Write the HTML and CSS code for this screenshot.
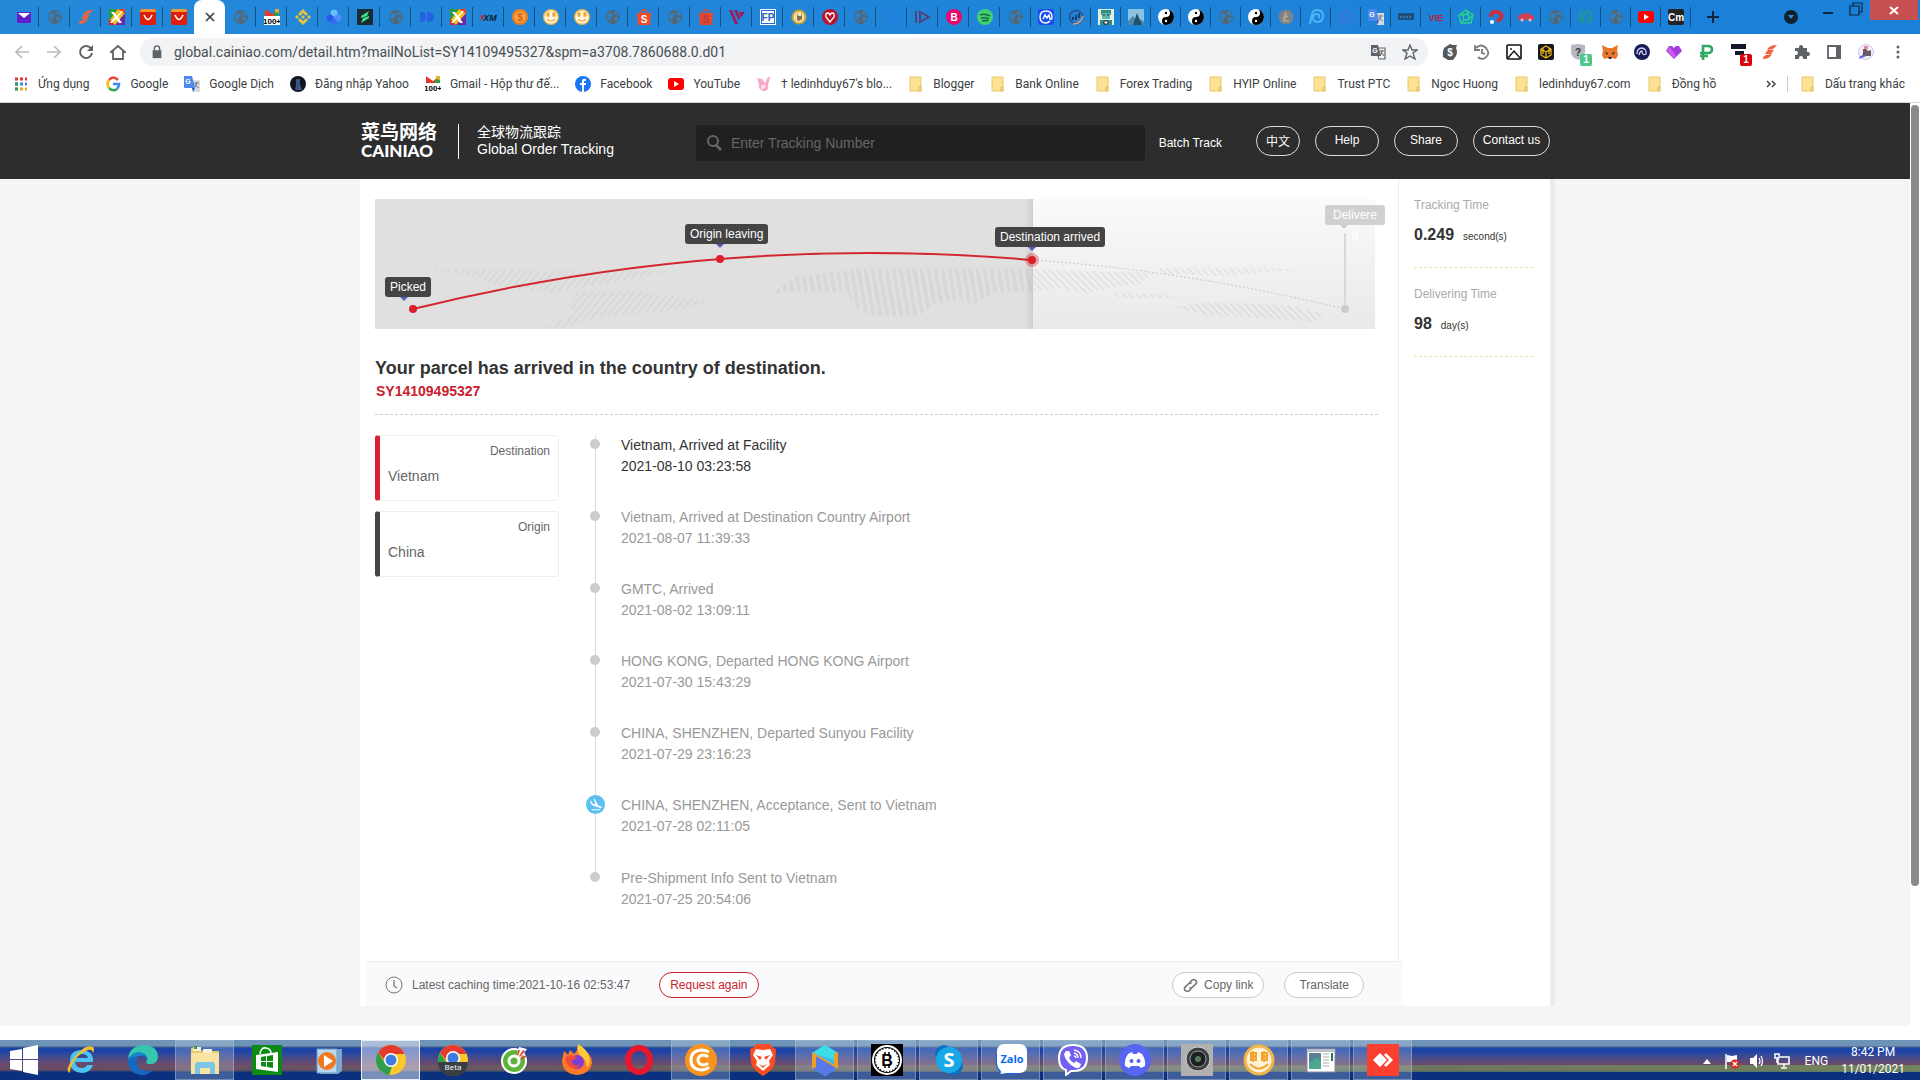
FILE: index.html
```html
<!DOCTYPE html>
<html lang="en">

<head>
  <meta charset="utf-8">
  <title>Global Order Tracking</title>
  <link rel="stylesheet" href="styles.css">
</head>

<body>
  <!-- icon sprite -->
  <svg class="sprite" aria-hidden="true">
    <symbol id="globe" viewBox="0 0 16 16"><circle cx="8" cy="8" r="7" fill="#56656f"/><path d="M2 6l3-2 3 1-1 3-2 1 1 3-1 1-3-4zM9 2l4 2 1 3-3-1-2-1zM9 8l3 0 2 2-3 4-1-3z" fill="#2a83c8"/></symbol>
    <symbol id="yahoo" viewBox="0 0 16 16"><rect x="1" y="3" width="14" height="11" fill="#6020c8"/><path d="M2 4h12L8 9z" fill="#fff"/></symbol>
    <symbol id="stripes" viewBox="0 0 16 16"><path d="M15 1Q7 1 5 6l6-1zM12 6H6Q4 8 3 10h6zM10 10l-6 1q-3 1-3 4 7 0 9-5z" fill="#f0643c"/></symbol>
    <symbol id="rainbow" viewBox="0 0 16 16"><rect width="16" height="16" fill="#f2c21a"/><path d="M0 0h9L0 12z" fill="#2a9a4a"/><path d="M16 4v12H6z" fill="#6a2aa8"/><path d="M0 10l6 6H0z" fill="#d8232a"/><path d="M9 0h7v5z" fill="#e8442a"/><path d="M2 3h3l3 4 4-5h2l-5 6 4 6h-3L7 10l-4 4H1l5-6z" fill="#fff"/></symbol>
    <symbol id="bag" viewBox="0 0 16 16"><rect width="16" height="16" rx="2" fill="#e01e0c"/><path d="M0 2q0-2 2-2h12q2 0 2 2v1H0z" fill="#f29a2a"/><path d="M4 6q4 9 8 0" fill="none" stroke="#fff" stroke-width="1.6"/></symbol>
    <symbol id="gmail" viewBox="0 0 16 16"><path d="M1 0l7 5 7-5v8H1z" fill="#e8382a"/><path d="M10 4l5-4v8h-5z" fill="#2aa04a"/><path d="M11 0h4v4l-4-1z" fill="#e8b020"/><rect y="7" width="16" height="9" fill="#fff"/><text x="8" y="15" class="t9" text-anchor="middle">100+</text></symbol>
    <symbol id="binance" viewBox="0 0 16 16"><path d="M8 0l5 5-2 2-3-3-3 3-2-2zM8 16l5-5-2-2-3 3-3-3-2 2zM8 6l2 2-2 2-2-2zM2 6l2 2-2 2-2-2zM14 6l2 2-2 2-2-2z" fill="#e8c040"/></symbol>
    <symbol id="petals" viewBox="0 0 16 16"><circle cx="8" cy="4" r="3.5" fill="#6ac0ff"/><circle cx="4" cy="9" r="3.5" fill="#2a58e8"/><circle cx="12" cy="9" r="3.5" fill="#4a90f8"/><circle cx="8" cy="13" r="3" fill="#3a6af0"/></symbol>
    <symbol id="bolt" viewBox="0 0 16 16"><rect width="16" height="16" fill="#1c2a33"/><path d="M12 2L4 7v2l6-2zM4 14l8-5V7L6 9z" fill="#3ee088"/></symbol>
    <symbol id="dd" viewBox="0 0 16 16"><path d="M1 3h3q3 1 3 5t-3 5H1zM8 3h2q5 1 5 5t-5 5H8z" fill="#2462e0"/></symbol>
    <symbol id="xm" viewBox="0 0 16 16"><text x="9" y="12" class="xm" text-anchor="middle">XM</text><path d="M0 5l3 3-3 4z" fill="#c8232a"/></symbol>
    <symbol id="coin" viewBox="0 0 16 16"><circle cx="8" cy="8" r="8" fill="#f08020"/><circle cx="8" cy="8" r="5.5" fill="#f8a840"/><text x="8" y="12" class="glyph" fill="#d86010" text-anchor="middle">$</text></symbol>
    <symbol id="smile" viewBox="0 0 16 16"><circle cx="8" cy="8" r="7.3" fill="#fff6e0" stroke="#f2b545" stroke-width="1.4"/><path d="M5 3v5M11 3v5M4 4h2v3H4zM10 4h2v3h-2zM4 10q4 4 8 0" fill="none" stroke="#f2a530" stroke-width="1.1"/></symbol>
    <symbol id="shopee" viewBox="0 0 16 16"><path d="M1 4h14l-1 12H2z" fill="#f04a28"/><path d="M5 5q0-4 3-4t3 4" fill="none" stroke="#f04a28" stroke-width="1.5"/><text x="8" y="14" class="glyph" fill="#fff" text-anchor="middle">S</text></symbol>
    <symbol id="shopee-dim" viewBox="0 0 16 16"><path d="M1 4h14l-1 12H2z" fill="#e0482f"/><path d="M5 5q0-4 3-4t3 4" fill="none" stroke="#d8482f" stroke-width="1.5"/><text x="8" y="14" class="glyph" fill="#b83a3a" text-anchor="middle">S</text></symbol>
    <symbol id="vv" viewBox="0 0 16 16"><path d="M0 1h3l6 14H6zM5 1h3l3 7-1 4zM10 3h6l-4 6z" fill="#a01a5a"/></symbol>
    <symbol id="fp" viewBox="0 0 16 16"><rect width="16" height="16" fill="#fff"/><rect x="1.5" y="1.5" width="13" height="13" fill="none" stroke="#2a6ad0"/><text x="8" y="12" class="glyph" fill="#2060c8" text-anchor="middle">FP</text></symbol>
    <symbol id="doge" viewBox="0 0 16 16"><circle cx="8" cy="8" r="7.5" fill="#c8a030"/><circle cx="8" cy="8" r="5.5" fill="#f0e0b0"/><path d="M6 4l1 3h3l1-3v6l-3 2-2-1z" fill="#8a7040"/></symbol>
    <symbol id="heart" viewBox="0 0 16 16"><circle cx="8" cy="8" r="8" fill="#b8142c"/><path d="M8 13L4 8q-1-4 2-4 1 0 2 2 1-2 2-2 3 0 2 4z" fill="none" stroke="#fff" stroke-width="1.3"/></symbol>
    <symbol id="drop" viewBox="0 0 16 16"><path d="M8 3l4 8H4z" fill="none" stroke="#2280e0" stroke-width="3"/></symbol>
    <symbol id="play" viewBox="0 0 16 16"><path d="M1 2v12M5 3l9 5-9 5z" fill="none" stroke="#5a3a70" stroke-width="1.8"/></symbol>
    <symbol id="btc-pink" viewBox="0 0 16 16"><circle cx="8" cy="8" r="8" fill="#e8086a"/><text x="8" y="12" class="glyph" fill="#fff" text-anchor="middle">B</text></symbol>
    <symbol id="spotify" viewBox="0 0 16 16"><circle cx="8" cy="8" r="8" fill="#3fd070"/><path d="M3 6q5-2 10 1M4 9q4-1 8 1M5 12q3-1 6 0" fill="none" stroke="#1a6a48" stroke-width="1.5"/></symbol>
    <symbol id="cmc" viewBox="0 0 16 16"><rect width="16" height="16" rx="2" fill="#1a50f0"/><path d="M12 12q-2 2-4 2-6 0-6-6t6-6q6 0 6 6 0 3-2 2l-1-4-2 3-2-3-2 4" fill="none" stroke="#fff" stroke-width="1.4"/></symbol>
    <symbol id="compass" viewBox="0 0 16 16"><circle cx="8" cy="8" r="6.5" fill="none" stroke="#285a98" stroke-width="2"/><path d="M5 11V8M8 11V6M11 9V4" stroke="#1c3f78" stroke-width="2" fill="none"/><path d="M5 15q8 0 10-8" fill="none" stroke="#d0a080" stroke-width="1.5"/></symbol>
    <symbol id="doctor" viewBox="0 0 16 16"><rect width="16" height="16" fill="#e4ede0"/><path d="M3 1h10v5H3zM2 11h12v5H2z" fill="#2a9088"/><rect x="4" y="4" width="8" height="6" fill="#60b8a8"/><path d="M5 6h2M9 6h2M6 12h4v3H6z" stroke="#223" fill="#fff"/></symbol>
    <symbol id="mountain" viewBox="0 0 16 16"><rect width="16" height="16" fill="#8cc4e0"/><path d="M0 12l5-5 5 6 3-3 3 3v3H0z" fill="#4a88ac"/><path d="M5 16l4-12 5 12z" fill="#234f70"/></symbol>
    <symbol id="yy" viewBox="0 0 16 16"><circle cx="8" cy="8" r="8" fill="#fff"/><path d="M8 0a8 8 0 0 1 0 16 4 4 0 0 1 0-8 4 4 0 0 0 0-8z" fill="#000"/><circle cx="8" cy="4" r="1.2" fill="#000"/><circle cx="8" cy="12" r="1.2" fill="#fff"/></symbol>
    <symbol id="ltc" viewBox="0 0 16 16"><circle cx="8" cy="8" r="7.5" fill="#7d8287"/><path d="M8 3L6 12h5M5 9l5-2" fill="none" stroke="#b8a890" stroke-width="1.6"/></symbol>
    <symbol id="pp" viewBox="0 0 16 16"><path d="M2 15L4 5q1-4 5-4 6 0 6 6t-6 6q-4 0-4-5 0-3 4-3 3 0 2 4" fill="none" stroke="#48b8f8" stroke-width="1.9"/></symbol>
    <symbol id="cloud" viewBox="0 0 16 16"><path d="M4 13q-3 0-3-3t3-3q0-5 4-5t4 4q3 1 3 4t-3 3zM5 13q0-4 4-4" fill="none" stroke="#4a70e8" stroke-width="1.4"/></symbol>
    <symbol id="trans" viewBox="0 0 16 16"><path d="M7 4h9v12H9z" fill="#d8dce0"/><path d="M0 0h8l3 12H1q-1 0-1-1z" fill="#4a88ec"/><path d="M8 12h3l-2 4z" fill="#2a58b8"/><text x="4" y="8" class="t7" fill="#fff" text-anchor="middle">G</text><path d="M10 7h5M13 6q0 4-3 6M11 8q1 3 4 4" fill="none" stroke="#708090"/></symbol>
    <symbol id="banner" viewBox="0 0 16 16"><rect y="4" width="16" height="7" fill="#1c4f80"/><path d="M2 8h12" stroke="#5a98c0" stroke-dasharray="2 1"/></symbol>
    <symbol id="vie" viewBox="0 0 16 16"><text x="8" y="12" class="vie" fill="#b8203a" text-anchor="middle">VIE</text></symbol>
    <symbol id="penta" viewBox="0 0 16 16"><path d="M8 1l7 5-2 8H3L1 6zM8 5l3 2-1 4H6L5 7zM8 1l3 6M15 6l-5 5M3 14l3-3M1 6l7-1" fill="none" stroke="#28d090" stroke-width="1.4"/></symbol>
    <symbol id="qmark" viewBox="0 0 16 16"><path d="M3 8q0-6 6-5 6 1 4 6-1 2-4 3" fill="none" stroke="#c83040" stroke-width="4"/><circle cx="4" cy="13" r="2" fill="#fff"/></symbol>
    <symbol id="car" viewBox="0 0 16 16"><path d="M0 9l1-3 4-1 2-1h4l2 2 3 1v4H1z" fill="#d04050"/><circle cx="4" cy="11" r="1.5" fill="#e0c0c8"/><circle cx="12" cy="11" r="1.5" fill="#e0c0c8"/></symbol>
    <symbol id="swirl" viewBox="0 0 16 16"><path d="M3 13q-4-6 2-11M6 14q-3-5 3-11M9 14l5-9M12 13l3-4M9 2l5 1" fill="none" stroke="#1f9a90" stroke-width="2"/></symbol>
    <symbol id="youtube" viewBox="0 0 16 16"><rect y="2" width="16" height="12" rx="3" fill="#f00"/><path d="M6 5l5 3-5 3z" fill="#fff"/></symbol>
    <symbol id="cm" viewBox="0 0 16 16"><rect width="16" height="16" rx="2" fill="#222"/><text x="8" y="12" class="glyph" fill="#fff" text-anchor="middle">Cm</text></symbol>
    <symbol id="folder" viewBox="0 0 16 16"><path d="M2 1h11v14H2z" fill="#fde293" stroke="#e8c96a"/><path d="M11 11h2v4h-2z" fill="#fbe9b0" stroke="#e0bb50"/></symbol>
  </svg>

  <div class="browser">
    <header class="tab-strip">
      <nav class="tabs" aria-label="Tabs">
        <button class="tab"><svg><use href="#yahoo"/></svg></button>
        <button class="tab"><svg><use href="#globe"/></svg></button>
        <button class="tab"><svg><use href="#stripes"/></svg></button>
        <button class="tab"><svg><use href="#rainbow"/></svg></button>
        <button class="tab"><svg><use href="#bag"/></svg></button>
        <button class="tab before-active"><svg><use href="#bag"/></svg></button>
        <button class="tab active" aria-label="Close tab"><svg viewBox="0 0 16 16"><path d="M4 4l8 8M12 4l-8 8" stroke="#3c4043" stroke-width="1.7"/></svg></button>
        <button class="tab"><svg><use href="#globe"/></svg></button>
        <button class="tab"><svg><use href="#gmail"/></svg></button>
        <button class="tab"><svg><use href="#binance"/></svg></button>
        <button class="tab"><svg><use href="#petals"/></svg></button>
        <button class="tab"><svg><use href="#bolt"/></svg></button>
        <button class="tab"><svg><use href="#globe"/></svg></button>
        <button class="tab"><svg><use href="#dd"/></svg></button>
        <button class="tab"><svg><use href="#rainbow"/></svg></button>
        <button class="tab"><svg><use href="#xm"/></svg></button>
        <button class="tab"><svg><use href="#coin"/></svg></button>
        <button class="tab"><svg><use href="#smile"/></svg></button>
        <button class="tab"><svg><use href="#smile"/></svg></button>
        <button class="tab"><svg><use href="#globe"/></svg></button>
        <button class="tab"><svg><use href="#shopee"/></svg></button>
        <button class="tab"><svg><use href="#globe"/></svg></button>
        <button class="tab"><svg><use href="#shopee-dim"/></svg></button>
        <button class="tab"><svg><use href="#vv"/></svg></button>
        <button class="tab"><svg><use href="#fp"/></svg></button>
        <button class="tab"><svg><use href="#doge"/></svg></button>
        <button class="tab"><svg><use href="#heart"/></svg></button>
        <button class="tab"><svg><use href="#globe"/></svg></button>
        <button class="tab"><svg><use href="#drop"/></svg></button>
        <button class="tab"><svg><use href="#play"/></svg></button>
        <button class="tab"><svg><use href="#btc-pink"/></svg></button>
        <button class="tab"><svg><use href="#spotify"/></svg></button>
        <button class="tab"><svg><use href="#globe"/></svg></button>
        <button class="tab"><svg><use href="#cmc"/></svg></button>
        <button class="tab"><svg><use href="#compass"/></svg></button>
        <button class="tab"><svg><use href="#doctor"/></svg></button>
        <button class="tab"><svg><use href="#mountain"/></svg></button>
        <button class="tab"><svg><use href="#yy"/></svg></button>
        <button class="tab"><svg><use href="#yy"/></svg></button>
        <button class="tab"><svg><use href="#globe"/></svg></button>
        <button class="tab"><svg><use href="#yy"/></svg></button>
        <button class="tab"><svg><use href="#ltc"/></svg></button>
        <button class="tab"><svg><use href="#pp"/></svg></button>
        <button class="tab"><svg><use href="#cloud"/></svg></button>
        <button class="tab"><svg><use href="#trans"/></svg></button>
        <button class="tab"><svg><use href="#banner"/></svg></button>
        <button class="tab"><svg><use href="#vie"/></svg></button>
        <button class="tab"><svg><use href="#penta"/></svg></button>
        <button class="tab"><svg><use href="#qmark"/></svg></button>
        <button class="tab"><svg><use href="#car"/></svg></button>
        <button class="tab"><svg><use href="#globe"/></svg></button>
        <button class="tab"><svg><use href="#swirl"/></svg></button>
        <button class="tab"><svg><use href="#globe"/></svg></button>
        <button class="tab"><svg><use href="#youtube"/></svg></button>
        <button class="tab"><svg><use href="#cm"/></svg></button>
      </nav>
      <button class="new-tab" aria-label="New tab"><svg viewBox="0 0 16 16"><path d="M8 2v12M2 8h12" stroke="#10243a" stroke-width="2"/></svg></button>
      <div class="window-controls">
        <button class="tab-search" aria-label="Search tabs"><svg viewBox="0 0 16 16"><circle cx="8" cy="8" r="7" fill="#10202e"/><path d="M5 6h6l-3 4z" fill="#2d8bdc"/></svg></button>
        <button class="win" aria-label="Minimize"><svg viewBox="0 0 16 16"><path d="M3 11h10" stroke="#10243a" stroke-width="2"/></svg></button>
        <button class="win" aria-label="Restore"><svg viewBox="0 0 16 16"><path d="M2 4h9v9H2zM5 4V1h9v9h-3" fill="none" stroke="#10243a" stroke-width="1.2"/></svg></button>
        <button class="win close" aria-label="Close"><svg viewBox="0 0 16 16"><path d="M4 5l8 7M12 5l-8 7" stroke="#fff" stroke-width="2"/></svg></button>
      </div>
    </header>

    <div class="toolbar">
      <button class="tool" aria-label="Back"><svg viewBox="0 0 16 16"><path d="M15 8H2M8 2L2 8l6 6" fill="none" stroke="#babcbe" stroke-width="1.7"/></svg></button>
      <button class="tool" aria-label="Forward"><svg viewBox="0 0 16 16"><path d="M1 8h13M8 2l6 6-6 6" fill="none" stroke="#babcbe" stroke-width="1.7"/></svg></button>
      <button class="tool" aria-label="Reload"><svg viewBox="0 0 16 16"><path d="M13 4.500A6 6 0 1 0 14 9" fill="none" stroke="#5f6368" stroke-width="2"/><path d="M15 1v6H9z" fill="#5f6368"/></svg></button>
      <button class="tool" aria-label="Home"><svg viewBox="0 0 16 16"><path d="M1 8l7-6 7 6h-2v7H3V8z" fill="none" stroke="#5f6368" stroke-width="1.8"/></svg></button>
      <div class="omnibox">
        <svg class="lock" viewBox="0 0 16 16"><path d="M3 6h10v9H3z" fill="#5f6368"/><path d="M5 7V4q0-3 3-3t3 3v3" fill="none" stroke="#5f6368" stroke-width="1.6"/></svg>
        <input class="url" type="text" aria-label="Address" value="global.cainiao.com/detail.htm?mailNoList=SY14109495327&amp;spm=a3708.7860688.0.d01">
        <button class="tool" aria-label="Translate page"><svg viewBox="0 0 16 16"><path d="M1 1h7l3 11H1z" fill="#5f6368"/><path d="M9 4h6v11H9l-1-3" fill="none" stroke="#5f6368" stroke-width="1.2"/><text x="5" y="9" class="t7" fill="#fff" text-anchor="middle">G</text><path d="M10 7h4M12 6q0 4-2 6M11 8l3 4" fill="none" stroke="#5f6368"/></svg></button>
        <button class="tool" aria-label="Bookmark"><svg viewBox="0 0 16 16"><path d="M8 1l2 5h5l-4 3 2 6-5-3-5 3 2-6-4-3h5z" fill="none" stroke="#5f6368" stroke-width="1.4"/></svg></button>
      </div>
      <button class="tool"><svg viewBox="0 0 16 16"><path d="M8 0l3 1h4l-1 3q2 4 0 8l-3 4H6l-5-3q-1-5 1-9z" fill="#55595d"/><text x="8" y="12" class="glyph" fill="#fff" text-anchor="middle">$</text></svg></button>
      <button class="tool"><svg viewBox="0 0 16 16"><path d="M2 4q5-5 10 0 5 6-1 10-4 2-7-1M1 1v5h5M8 5v4l3 1" fill="none" stroke="#77797c" stroke-width="1.8"/></svg></button>
      <button class="tool"><svg viewBox="0 0 16 16"><rect x="1" y="1" width="14" height="14" rx="1" fill="none" stroke="#111" stroke-width="1.6"/><path d="M2 14l6-7 6 7M5 4v2" fill="none" stroke="#111" stroke-width="1.4"/></svg></button>
      <button class="tool"><svg viewBox="0 0 16 16"><rect width="16" height="16" rx="2" fill="#17181c"/><path d="M8 2l5 3v6l-5 3-5-3V5zM3 5l5 3 5-3M8 8v6M5 4v6M11 4v6" fill="none" stroke="#e8b018" stroke-width="1.3"/></svg></button>
      <button class="tool"><svg viewBox="0 0 16 16"><path d="M1 1l7-1 7 1v7q0 5-7 8-7-3-7-8z" fill="#b5b9c4"/><text x="8" y="12" class="glyph" fill="#333" text-anchor="middle">?</text></svg><span class="badge green">1</span></button>
      <button class="tool"><svg viewBox="0 0 16 16"><path d="M0 1l6 3h4l6-3-1 6 1 4-2 4-4-1-2 1-2-1-4 1-2-4 1-4z" fill="#e8772a"/><path d="M3 8l3 1-1 2zM13 8l-3 1 1 2zM6 13h4l-1 2H7z" fill="#2b2a2a"/></svg></button>
      <button class="tool"><svg viewBox="0 0 16 16"><circle cx="8" cy="8" r="8" fill="#1c1a54"/><path d="M3 10q0-6 5-6 5 1 4 6-4 2-4-3-2 0-3 4" fill="none" stroke="#c8cdf8" stroke-width="1.3"/></svg></button>
      <button class="tool"><svg viewBox="0 0 16 16"><path d="M8 15L0 7l3-5h3l2 2 2-2h3l3 5z" fill="#a03ee0"/><path d="M4 3l6 9-2 2-7-7z" fill="#cf5ae8"/></svg></button>
      <button class="tool"><svg viewBox="0 0 16 16"><path d="M5 16V2h5q4 0 4 3.500T10 9H2M2 12h8" fill="none" stroke="#2fa866" stroke-width="2.6"/></svg></button>
      <button class="tool"><svg viewBox="0 0 16 16"><path d="M1 0h15v5H1zM5 7h9v4H5z" fill="#15182a"/></svg><span class="badge red">1</span></button>
      <button class="tool"><svg><use href="#stripes"/></svg></button>
      <button class="tool" aria-label="Extensions"><svg viewBox="0 0 16 16"><path d="M1 4h4V3q0-2 2-2t2 2v1h4v4h1q2 0 2 2t-2 2h-1v3H9v-1q0-2-2-2t-2 2v1H1v-4h1q2 0 2-2T2 7H1z" fill="#5f6368"/></svg></button>
      <button class="tool" aria-label="Side panel"><svg viewBox="0 0 16 16"><path d="M2 2h12v12H2z" fill="#fff" stroke="#5f6368" stroke-width="1.8"/><path d="M10 1h5v14h-5z" fill="#5f6368"/></svg></button>
      <button class="tool" aria-label="Profile"><svg viewBox="0 0 16 16"><circle cx="8" cy="8" r="7.5" fill="#f4f0fa" stroke="#cfc4ee"/><path d="M5 5h3l2 2 3-1v6H4l1-3z" fill="#6c5a60"/><path d="M2 12l8-1-4 2-5 2z" fill="#5a68d8"/><path d="M6 2h4v3H6z" fill="#e08a98"/></svg></button>
      <button class="tool" aria-label="Menu"><svg viewBox="0 0 16 16"><circle cx="8" cy="3" r="1.5" fill="#5f6368"/><circle cx="8" cy="8" r="1.5" fill="#5f6368"/><circle cx="8" cy="13" r="1.5" fill="#5f6368"/></svg></button>
    </div>

    <nav class="bookmarks" aria-label="Bookmarks">
      <a href="#"><svg viewBox="0 0 16 16"><path d="M2 3h12" stroke="#d8382e" stroke-width="3" stroke-dasharray="3 2"/><path d="M2 8h12" stroke="#3a8ae0" stroke-width="3" stroke-dasharray="3 2"/><path d="M2 13h12" stroke="#e8a820" stroke-width="3" stroke-dasharray="3 2"/><path d="M2 8h3M2 13h3" stroke="#2f9a58" stroke-width="3"/></svg>Ứng dụng</a>
      <a href="#"><svg viewBox="0 0 16 16"><path d="M13 4Q8-1 4 4" fill="none" stroke="#ea4335" stroke-width="2.5"/><path d="M4 4q-3 4 0 8" fill="none" stroke="#fbbc05" stroke-width="2.5"/><path d="M4 12q4 4 8 1" fill="none" stroke="#34a853" stroke-width="2.5"/><path d="M12 13q2-2 2-5H8" fill="none" stroke="#4285f4" stroke-width="2.5"/></svg>Google</a>
      <a href="#"><svg><use href="#trans"/></svg>Google Dịch</a>
      <a href="#"><svg viewBox="0 0 16 16"><circle cx="8" cy="8" r="8" fill="#12141f"/><path d="M6 3h4v5l2 6H5l1-5z" fill="#3a5580"/></svg>Đăng nhập Yahoo</a>
      <a href="#"><svg><use href="#gmail"/></svg>Gmail - Hộp thư đế...</a>
      <a href="#"><svg viewBox="0 0 16 16"><circle cx="8" cy="8" r="8" fill="#1877f2"/><path d="M7 16V9H5V7h2V5q0-3 4-2v2H9v2h2v2H9v7z" fill="#fff"/></svg>Facebook</a>
      <a href="#"><svg><use href="#youtube"/></svg>YouTube</a>
      <a href="#"><svg viewBox="0 0 16 16"><path d="M1 2l5 1 3 4 3-6h2l-2 8q1 6-4 6-6 0-5-7z" fill="#f8a8c8"/><path d="M5 10q3-3 5 0-2 4-5 3z" fill="#fde"/></svg>† ledinhduy67's blo...</a>
      <a href="#"><svg><use href="#folder"/></svg>Blogger</a>
      <a href="#"><svg><use href="#folder"/></svg>Bank Online</a>
      <a href="#"><svg><use href="#folder"/></svg>Forex Trading</a>
      <a href="#"><svg><use href="#folder"/></svg>HYIP Online</a>
      <a href="#"><svg><use href="#folder"/></svg>Trust PTC</a>
      <a href="#"><svg><use href="#folder"/></svg>Ngoc Huong</a>
      <a href="#"><svg><use href="#folder"/></svg>ledinhduy67.com</a>
      <a href="#"><svg><use href="#folder"/></svg>Đồng hồ</a>
      <button class="overflow" aria-label="More bookmarks"><svg viewBox="0 0 16 16"><path d="M4 5l3 3-3 3M9 5l3 3-3 3" fill="none" stroke="#444" stroke-width="1.5"/></svg></button>
      <a class="others" href="#"><svg><use href="#folder"/></svg>Dấu trang khác</a>
    </nav>

    <div class="viewport">
      <div class="page">
        <header class="site-header">
          <div class="wrap">
            <a class="logo" href="#"><span class="logo-cn">菜鸟网络</span><span class="logo-en">CAINIAO</span></a>
            <p class="slogan">全球物流跟踪<br>Global Order Tracking</p>
            <label class="search">
              <svg viewBox="0 0 16 16"><circle cx="7" cy="6" r="5" fill="none" stroke="#666" stroke-width="2"/><path d="M10 10l5 5" stroke="#666" stroke-width="2.5"/></svg>
              <input type="text" placeholder="Enter Tracking Number" aria-label="Tracking number">
            </label>
            <a class="batch" href="#">Batch Track</a>
            <div class="links">
              <button class="pill small">中文</button>
              <button class="pill">Help</button>
              <button class="pill">Share</button>
              <button class="pill wide">Contact us</button>
            </div>
          </div>
        </header>

        <div class="wrap content">
          <main class="main">
            <section class="map">
              <svg class="route" viewBox="0 0 1000 130" preserveAspectRatio="none">
                <defs>
                  <pattern id="hatch" width="7" height="3" patternUnits="userSpaceOnUse" patternTransform="skewX(10)"><rect width="4" height="3" fill="#000" opacity=".04"/></pattern>
                  <pattern id="slant" width="7" height="3" patternUnits="userSpaceOnUse" patternTransform="skewX(-40)"><rect width="3" height="3" fill="#000" opacity=".035"/></pattern>
                  <pattern id="slant-r" width="7" height="3" patternUnits="userSpaceOnUse" patternTransform="skewX(45)"><rect width="3" height="3" fill="#000" opacity=".05"/></pattern>
                  <linearGradient id="sky" x1="0" y1="0" x2="0" y2="1"><stop offset="0" stop-color="#fafafa"/><stop offset="1" stop-color="#e9e9e9"/></linearGradient>
                  <linearGradient id="edge"><stop offset="0" stop-color="#e0e0e0"/><stop offset="1" stop-color="#cdcdcd"/></linearGradient>
                </defs>
                <rect width="1000" height="130" fill="url(#sky)"/>
                <rect width="658" height="130" fill="#e0e0e0"/>
                <rect x="650" width="8" height="130" fill="url(#edge)"/>
                <path d="M46 70l190 2 60 0-50 10-40 6-30 6-60-8-10-8z" fill="url(#slant)"/>
                <path d="M200 94l60-2 75 10-25 8-40 4-45 3-35 11-20 1 30-14-5-8z" fill="url(#slant)"/>
                <path d="M400 92l20-14 60-8 178 0v22l-40 2-20 12-10-6-30 5-15 12-45 0-20-10-5-13-30-2-43 2z" fill="url(#hatch)"/>
                <path d="M658 70l120 4-10 10-45 7-12 4-25-6-28 3z" fill="url(#slant-r)"/>
                <path d="M780 69l150 1-40 3-40 4-60-2zM735 94l50 1 20 4-60 0zM800 108l30-5 85 3 35 10-10 7-50-4-60-3z" fill="url(#slant-r)"/>
                <path d="M658 61Q813 72 970 110" fill="none" stroke="#c6c6c6" stroke-dasharray="2 2"/>
                <path d="M970 34v72" stroke="#d8d8d8" stroke-width="2"/>
                <path d="M38 110Q347 34 657 61" fill="none" stroke="#d22630" stroke-width="2"/>
                <circle cx="38" cy="110" r="4" fill="#d8202a"/>
                <circle cx="345" cy="60" r="4" fill="#d8202a"/>
                <circle cx="657" cy="61" r="7" fill="#d8202a" opacity=".35"/>
                <circle cx="657" cy="61" r="4" fill="#d8202a"/>
                <circle cx="970" cy="110" r="4" fill="#ccc"/>
              </svg>
              <span class="tip picked">Picked</span>
              <span class="tip leaving">Origin leaving</span>
              <span class="tip arrived">Destination arrived</span>
              <span class="tip delivered">Delivered</span>
            </section>

            <section class="summary">
              <h1>Your parcel has arrived in the country of destination.</h1>
              <p class="mail-no">SY14109495327</p>
            </section>

            <div class="detail">
              <div class="places">
                <div class="place destination"><span class="label">Destination</span><span class="country">Vietnam</span></div>
                <div class="place"><span class="label">Origin</span><span class="country">China</span></div>
              </div>
              <ol class="timeline">
                <li class="current">Vietnam, Arrived at Facility<time>2021-08-10 03:23:58</time></li>
                <li>Vietnam, Arrived at Destination Country Airport<time>2021-08-07 11:39:33</time></li>
                <li>GMTC, Arrived<time>2021-08-02 13:09:11</time></li>
                <li>HONG KONG, Departed HONG KONG Airport<time>2021-07-30 15:43:29</time></li>
                <li>CHINA, SHENZHEN, Departed Sunyou Facility<time>2021-07-29 23:16:23</time></li>
                <li class="flight"><svg viewBox="0 0 20 20"><circle cx="10" cy="10" r="10" fill="#5bc0f0"/><path d="M4 6l1 0 2 3 3 1-2-6 1 0 4 7 3 1q1 1 0 2l-9-3q-2-1-3-5zM6 15h9v1H6z" fill="#fff"/></svg>CHINA, SHENZHEN, Acceptance, Sent to Vietnam<time>2021-07-28 02:11:05</time></li>
                <li>Pre-Shipment Info Sent to Vietnam<time>2021-07-25 20:54:06</time></li>
              </ol>
            </div>

            <footer class="cache">
              <svg viewBox="0 0 18 18"><circle cx="9" cy="9" r="8" fill="none" stroke="#777"/><path d="M9 4v6l3 2" fill="none" stroke="#777" stroke-width="1.3"/></svg>
              <span>Latest caching time:2021-10-16 02:53:47</span>
              <button class="pill-light again">Request again</button>
              <button class="pill-light copy"><svg viewBox="0 0 16 16"><path d="M7 5l3-3q2-1 4 1 1 2 0 3l-4 4q-2 1-3 0M9 11l-3 3q-2 1-4-1-1-2 0-3l4-4q2-1 3 0" fill="none" stroke="#777" stroke-width="1.7"/></svg>Copy link</button>
              <button class="pill-light">Translate</button>
            </footer>
          </main>

          <aside class="times">
            <div class="stat"><h2>Tracking Time</h2><p><b>0.249</b>second(s)</p></div>
            <div class="stat"><h2>Delivering Time</h2><p><b>98</b>day(s)</p></div>
          </aside>
        </div>
      </div>
      <div class="scrollbar"><div class="thumb"></div></div>
    </div>
  </div>

  <footer class="taskbar">
    <button class="app" aria-label="Start"><svg viewBox="0 0 32 32"><path d="M2 7l12-2v10H2zM15 4l15-3v14H15zM2 16h12v11L2 25zM15 16h15v15l-15-3z" fill="#fff"/></svg></button>
    <button class="app" aria-label="Internet Explorer"><svg viewBox="0 0 32 32"><path d="M28 18H10q1 6 7 6 4 0 5-3h6q-3 8-11 8Q5 28 5 17T17 6q12 1 11 12zM10 14h13q-1-4-6-4-6 0-7 4z" fill="#4cc3f5"/><path d="M5 29q-6-2 3-14Q20-1 28 3q2 2 0 6-1-4-5-3Q12 10 7 21q-3 6-2 8z" fill="#f0c030"/></svg></button>
    <button class="app" aria-label="Edge"><svg viewBox="0 0 32 32"><path d="M1 15Q2 2 17 1q14 1 14 12-1 8-9 7-4 0-2-4 1-5-5-7Q6 8 1 15z" fill="#35c8b0"/><path d="M1 15q5-7 12-5-6 6-1 14 5 5 14 2-5 6-13 5Q0 28 1 15z" fill="#1668c0"/><path d="M1 15Q8 4 18 10q4 4 2 7 0-7-8-5-8 1-11 3z" fill="#1a86cf"/></svg></button>
    <button class="app open" aria-label="File Explorer"><svg viewBox="0 0 32 32"><path d="M2 4h9l2 3h17v22H2z" fill="#e8c868"/><path d="M4 3h8v4H4zM14 5h9v4h-9z" fill="#f4f0dc"/><path d="M5 2h3v3H5z" fill="#3a9a3a"/><path d="M2 9h28v21H2z" fill="#f8e4a0"/><path d="M6 30V21q0-3 3-3h14q3 0 3 3v9h-5v-6H11v6z" fill="#7cc4e8"/></svg></button>
    <button class="app" aria-label="Store"><svg viewBox="0 0 32 32"><rect x="1" y="1" width="30" height="30" fill="#0c8a14"/><path d="M5 11l22-3v20L5 25z" fill="#fff"/><path d="M9 10q1-7 6-6t5 5" fill="none" stroke="#fff" stroke-width="1.5"/><path d="M10 13l5-1v5h-5zM16 12l6-1v6h-6zM10 18h5v5l-5-1zM16 18h6v6l-6-1z" fill="#0c8a14"/></svg></button>
    <button class="app" aria-label="Media Player"><svg viewBox="0 0 32 32"><path d="M7 5h22v22l-4 3H7z" fill="#7aa8d0"/><path d="M4 5h20v24H4z" fill="#b8d8f0" stroke="#6a98c0"/><circle cx="14" cy="17" r="9" fill="#f07820"/><path d="M11 11l9 6-9 6z" fill="#fff"/></svg></button>
    <button class="app focused" aria-label="Chrome"><svg viewBox="0 0 32 32"><circle cx="16" cy="16" r="15" fill="#fbc82c"/><path d="M3 8.500a15 15 0 0 1 26 0V10H16q-6 1-5 8z" fill="#e33b2e"/><path d="M3 8.500l8 12q2 3 6 2L14 31A15 15 0 0 1 3 8.500z" fill="#2f9e4f"/><circle cx="16" cy="16" r="7" fill="#fff"/><circle cx="16" cy="16" r="5.5" fill="#3d7de0"/></svg></button>
    <button class="app" aria-label="Chrome Beta"><svg viewBox="0 0 32 32"><circle cx="16" cy="16" r="15" fill="#fbc82c"/><path d="M3 8.500a15 15 0 0 1 26 0V10H16q-6 1-5 8z" fill="#e33b2e"/><path d="M3 8.500l8 12v4H4A15 15 0 0 1 3 8.500z" fill="#2f9e4f"/><circle cx="16" cy="14" r="7" fill="#fff"/><circle cx="16" cy="14" r="5.5" fill="#3d7de0"/><path d="M1 18h30a15 15 0 0 1-30 0z" fill="#3a3f44"/><text x="16" y="26" class="beta" text-anchor="middle">Beta</text></svg></button>
    <button class="app" aria-label="Coc Coc"><svg viewBox="0 0 32 32"><circle cx="15" cy="17" r="12" fill="#5bb538" stroke="#fff" stroke-width="2"/><path d="M17 14l3-11 8 2-8 11z" fill="#fff"/><circle cx="15" cy="17" r="5" fill="none" stroke="#fff" stroke-width="3"/><path d="M18 11l1-5 2 0-2 6zM20 12l4-6 2 1-5 6zM22 14l5-3 0 2-5 3z" fill="#e8472a"/></svg></button>
    <button class="app" aria-label="Firefox"><svg viewBox="0 0 32 32"><path d="M16 31Q2 30 1 17L3 7l4 4 2-5 4 4q4-3 4-10 5 3 7 8l3 1q4 4 4 10-2 11-15 12z" fill="#ff7a28"/><path d="M17 0q8 5 10 10 4 8-1 14 0-8-6-12-5-4-3-12z" fill="#ffca3a"/><circle cx="16" cy="18" r="7" fill="#7a3fd8"/><path d="M5 13q6-4 11 1l-6 3q3 6 10 4-5 6-11 2-5-4-4-10z" fill="#f04a3c"/></svg></button>
    <button class="app" aria-label="Opera"><svg viewBox="0 0 32 32"><ellipse cx="16" cy="16" rx="11" ry="12" fill="none" stroke="#e8182c" stroke-width="6"/></svg></button>
    <button class="app open" aria-label="CryptoTab"><svg viewBox="0 0 32 32"><circle cx="16" cy="16" r="16" fill="#f7931e"/><path d="M24 8q-4-2-8-2Q6 7 6 16t10 10q5 0 8-3M23 13q-2-2-5-2-5 1-5 5t5 5q3 0 5-2" fill="none" stroke="#fff" stroke-width="3"/></svg></button>
    <button class="app" aria-label="Brave"><svg viewBox="0 0 32 32"><path d="M9 0h14l3 4 3 1-1 14q-2 7-12 13Q6 26 4 19L3 5l3-1z" fill="#fb4b22"/><path d="M9 5l7 1 7-1 3 6-4 6 1 4-7 6-7-6 1-4-4-6z" fill="#fff"/><path d="M9 11l6 2-2 3zM23 11l-6 2 2 3zM12 20l4 2 4-2-4 4z" fill="#fb4b22"/></svg></button>
    <button class="app open" aria-label="NoxPlayer"><svg viewBox="0 0 32 32"><path d="M16 1l13 8v15l-13 8-13-8V9z" fill="#40b8f0"/><path d="M16 1l13 8v8L3 9z" fill="#3adde8"/><path d="M3 9l26 15-13 8-13-8z" fill="#5878e8"/><path d="M3 9l4 2v12l-4 2zM25 10l4-2v16l-4-2z" fill="#f0a020"/><path d="M3 9l26 15" stroke="#f0a020" stroke-width="1.5"/></svg></button>
    <button class="app open" aria-label="Bitcoin"><svg viewBox="0 0 32 32"><rect width="32" height="32" fill="#000"/><circle cx="16" cy="16" r="14" fill="none" stroke="#fff" stroke-width="2"/><circle cx="16" cy="16" r="11" fill="#fff" stroke="#fff" stroke-width="2" stroke-dasharray="2 1"/><text x="16" y="22" class="big" fill="#000" text-anchor="middle">B</text><path d="M14 8v3M18 8v3M14 21v3M18 21v3" stroke="#000" stroke-width="1.5"/></svg></button>
    <button class="app open" aria-label="Skype"><svg viewBox="0 0 32 32"><circle cx="11" cy="10" r="9" fill="#1070c0"/><circle cx="21" cy="22" r="9" fill="#1070c0"/><circle cx="16" cy="16" r="13" fill="#18a8e8"/><text x="16" y="23" class="huge" fill="#fff" text-anchor="middle">S</text></svg></button>
    <button class="app open" aria-label="Zalo"><svg viewBox="0 0 32 32"><rect x="1" y="2" width="27" height="28" rx="10" fill="#0868f0"/><path d="M10 0h14q8 0 8 8v13q0 8-8 8H12l-7 1q2-2 0-4-3-3-3-8V8q0-8 8-8z" fill="#fff"/><text x="17" y="19" class="zalo" fill="#0868f0" text-anchor="middle">Zalo</text></svg></button>
    <button class="app open" aria-label="Viber"><svg viewBox="0 0 32 32"><path d="M16 1q14 0 14 13t-14 13h-2l-5 4v-5Q2 24 2 14 2 1 16 1z" fill="#7360f2" stroke="#fff" stroke-width="2"/><path d="M9 7l3 0 2 4-2 3q2 4 5 5l2-2 5 3-1 3q-3 3-9-2-6-5-7-11z" fill="#fff"/><path d="M17 6q7 1 7 8M17 9q4 1 4 5M17 12q2 0 2 2" fill="none" stroke="#fff" stroke-width="1.3"/></svg></button>
    <button class="app open" aria-label="Discord"><svg viewBox="0 0 32 32"><circle cx="16" cy="16" r="16" fill="#5865f2"/><path d="M9 10l4-2 1 2h4l1-2 4 2q4 6 3 12l-4 2-2-2H12l-2 2-4-2Q5 16 9 10z" fill="#fff"/><circle cx="12.5" cy="17" r="2" fill="#5865f2"/><circle cx="19.5" cy="17" r="2" fill="#5865f2"/></svg></button>
    <button class="app open" aria-label="Camera"><svg viewBox="0 0 32 32"><rect width="32" height="32" fill="#b0b0b0"/><circle cx="17" cy="15" r="12" fill="#3c3f40" stroke="#d0d0d0"/><circle cx="17" cy="15" r="8" fill="#1b2021" stroke="#999"/><circle cx="17" cy="15" r="3" fill="#567a5c"/></svg></button>
    <button class="app open" aria-label="CryptoTab miner"><svg viewBox="0 0 32 32"><circle cx="16" cy="16" r="14" fill="#fff2d8" stroke="#f2b545" stroke-width="3"/><path d="M8 9h5v3H8zM8 13h5v3H8zM19 9h5v3h-5zM19 13h5v3h-5zM10 7v11M21 7v11M7 20q9 9 18 0" fill="none" stroke="#f2a530" stroke-width="2"/></svg></button>
    <button class="app open" aria-label="Monitor"><svg viewBox="0 0 32 32"><rect x="2" y="5" width="28" height="23" fill="#fff" stroke="#889"/><path d="M2 5h28v3H2z" fill="#b8c0c8"/><rect x="4" y="9" width="12" height="16" fill="#5a8098"/><path d="M4 20q8-10 12-3v8H4z" fill="#4aa890"/><path d="M18 10h6M18 13h6M18 16h6M18 19h6M18 22h6" stroke="#aaa"/><path d="M26 9h2v8h-2z" fill="#2a7a50"/></svg></button>
    <button class="app open" aria-label="AnyDesk"><svg viewBox="0 0 32 32"><rect width="32" height="32" fill="#fb4030"/><path d="M13 9l7 7-7 7-7-7zM17 11l2-2 7 7-7 7-2-2 5-5z" fill="#fff"/></svg></button>
    <div class="tray">
      <svg viewBox="0 0 16 16"><path d="M4 11l4-5 4 5z" fill="#fff"/></svg>
      <svg viewBox="0 0 16 16"><path d="M2 1v15" stroke="#fff" stroke-width="1.5"/><path d="M3 2l5 1 5-1v7H3z" fill="#fff"/><circle cx="11" cy="11" r="4.5" fill="#d8281e"/><path d="M9 9l4 4M13 9l-4 4" stroke="#fff" stroke-width="1.5"/></svg>
      <svg viewBox="0 0 16 16"><path d="M1 5h3l4-4v14l-4-4H1z" fill="#fff"/><path d="M10 5q2 3 0 6M12 3q3 5 0 10" fill="none" stroke="#fff" stroke-width="1.2"/></svg>
      <svg viewBox="0 0 16 16"><path d="M6 4h9v7H4V6M10 11v3M7 15h6M1 1h4v4H1zM3 5v5" fill="none" stroke="#fff" stroke-width="1.5"/></svg>
      <span class="lang">ENG</span>
      <time class="clock">8:42 PM<br>11/01/2021</time>
    </div>
  </footer>
</body>

</html>
```
FILE: styles.css
```css
* {
  box-sizing: border-box;
}

body {
  margin: 0;
  height: 100vh;
  display: flex;
  flex-direction: column;
  overflow: hidden;
  background: #fff;
  color: #333;
  font-family: "Liberation Sans", "Noto Sans CJK SC", Arial, sans-serif;
  font-size: 14px;
}

h1,
h2,
p,
ol {
  margin: 0;
  padding: 0;
}

a {
  color: inherit;
  text-decoration: none;
}

button {
  border: 0;
  padding: 0;
  background: none;
  color: inherit;
  font: inherit;
}

svg {
  display: block;
  flex: none;
}

.sprite {
  display: none;
}

/* small lettering inside icons */
.t9 {
  font: bold 8px "Liberation Sans", sans-serif;
  fill: #000;
}

.t7 {
  font: bold 7px "Liberation Sans", sans-serif;
}

.glyph {
  font: bold 10px "Liberation Sans", sans-serif;
}

.xm {
  font: italic bold 9px "Liberation Sans", sans-serif;
  fill: #12202e;
}

.vie {
  font: bold 9px "Liberation Sans", sans-serif;
}

.beta {
  font: 8px "Open Sans", sans-serif;
  fill: #fff;
}

.big {
  font: bold 16px "Liberation Sans", sans-serif;
}

.huge {
  font: bold 20px "Open Sans", sans-serif;
}

.zalo {
  font: bold 11px "Open Sans", sans-serif;
}

/* browser window */
.browser {
  flex: 1;
  min-height: 0;
  display: flex;
  flex-direction: column;
  padding-bottom: 14px;
}

.tab-strip {
  height: 34px;
  display: flex;
  align-items: stretch;
  padding-left: 8px;
  background: linear-gradient(90deg, #2489d9, #1a80d8);
}

.tabs {
  display: flex;
}

.tab {
  position: relative;
  width: 31px;
  display: flex;
  align-items: center;
  justify-content: center;
}

.tab:nth-child(n+34) {
  width: 30px;
}

.tab svg {
  width: 16px;
  height: 16px;
}

.tab::after {
  content: "";
  position: absolute;
  right: 0;
  top: 7px;
  width: 1px;
  height: 20px;
  background: #12507f;
}

.tab.before-active::after,
.tab.active::after {
  display: none;
}

.tab.active {
  background: #fff;
  border-radius: 8px 8px 0 0;
}

.new-tab {
  width: 44px;
  display: flex;
  align-items: center;
  justify-content: center;
}

.new-tab svg,
.tab-search svg {
  width: 16px;
  height: 16px;
}

.window-controls {
  margin-left: auto;
  display: flex;
  padding-right: 2px;
}

.tab-search {
  margin-right: 15px;
}

.win {
  width: 28px;
  height: 20px;
  display: flex;
  align-items: center;
  justify-content: center;
}

.win svg {
  width: 16px;
  height: 16px;
}

.win.close {
  width: 48px;
  background: #c75050;
}

.toolbar {
  height: 36px;
  display: flex;
  align-items: center;
  padding: 0 6px;
}

.tool {
  position: relative;
  width: 32px;
  height: 28px;
  display: flex;
  align-items: center;
  justify-content: center;
}

.tool svg {
  width: 16px;
  height: 16px;
}

.badge {
  position: absolute;
  right: 2px;
  bottom: 0;
  width: 12px;
  height: 12px;
  border-radius: 2px;
  color: #fff;
  font: bold 10px/12px "Liberation Sans", sans-serif;
}

.badge.green {
  background: #4fc78a;
}

.badge.red {
  background: #d8000c;
}

.omnibox {
  flex: 1;
  height: 28px;
  display: flex;
  align-items: center;
  margin: 0 6px;
  padding: 0 2px 0 10px;
  border-radius: 14px;
  background: #f1f3f4;
}

.lock {
  width: 14px;
  height: 14px;
}

.url {
  flex: 1;
  border: 0;
  padding: 0;
  margin-left: 10px;
  background: none;
  color: #4a4e53;
  font-family: Roboto, "Noto Sans", sans-serif;
  font-size: 14px;
}

.bookmarks {
  height: 33px;
  display: flex;
  align-items: center;
  gap: 16px;
  padding: 0 15px 4px 13px;
  border-bottom: 1px solid #d8d8d8;
  color: #3c4043;
  font-family: Roboto, "Noto Sans", sans-serif;
  font-size: 12px;
  white-space: nowrap;
}

.bookmarks a {
  display: flex;
  align-items: center;
  gap: 9px;
}

.bookmarks svg {
  width: 16px;
  height: 16px;
}

.overflow {
  margin-left: auto;
}

.others {
  margin-left: -8px;
  padding-left: 12px;
  border-left: 1px solid #ccc;
}

/* page area */
.viewport {
  flex: 1;
  min-height: 0;
  display: flex;
}

.page {
  flex: 1;
  background: #f5f5f5;
}

.scrollbar {
  width: 10px;
  padding: 2px 1px;
}

.thumb {
  height: 85%;
  border-radius: 4px;
  background: #8a8a8a;
}

.wrap {
  max-width: 1190px;
  margin: 0 auto;
}

.site-header {
  background: #2d2d2d;
  color: #fff;
}

.site-header .wrap {
  height: 76px;
  display: flex;
  align-items: center;
}

.logo {
  width: 99px;
  height: 35px;
  padding-left: 1px;
  border-right: 1px solid #fff;
  display: flex;
  flex-direction: column;
  justify-content: center;
  font-weight: bold;
}

.logo-cn {
  font-size: 19px;
  line-height: 18px;
}

.logo-en {
  font-family: Lato, sans-serif;
  font-size: 17px;
  font-weight: 900;
  line-height: 17px;
}

.slogan {
  width: 219px;
  margin-left: 18px;
  font-size: 14px;
  line-height: 17px;
}

.search {
  flex: 1;
  height: 36px;
  display: flex;
  align-items: center;
  gap: 9px;
  margin-top: 4px;
  padding: 0 10px;
  border-radius: 3px;
  background: #202020;
}

.search svg {
  width: 16px;
  height: 16px;
}

.search input {
  flex: 1;
  border: 0;
  padding: 0;
  background: none;
  color: #fff;
  font: inherit;
}

.search input::placeholder {
  color: #666;
}

.batch {
  margin: 4px 34px 0 14px;
  font-size: 12px;
}

.links {
  display: flex;
  gap: 15px;
}

.pill {
  width: 64px;
  height: 30px;
  padding-bottom: 2px;
  border: 1px solid #ddd;
  border-radius: 15px;
  font-size: 12px;
}

.pill.small {
  width: 44px;
}

.pill.wide {
  width: 77px;
}

.content {
  display: flex;
  background: #fff;
  box-shadow: 5px 0 0 #ececec;
}

.main {
  flex: 1;
  padding-top: 20px;
  border-right: 1px solid #eee;
}

.map {
  position: relative;
  margin: 0 23px 0 15px;
}

.route {
  width: 100%;
  height: 130px;
}

.tip {
  position: absolute;
  height: 20px;
  padding: 0 5px;
  border-radius: 3px;
  background: #444;
  color: #fff;
  font-size: 12px;
  line-height: 20px;
}

.tip::after {
  content: "";
  position: absolute;
  left: 50%;
  top: 100%;
  margin-left: -4px;
  border: 4px solid transparent;
  border-top-color: #5560b8;
  border-bottom: 0;
}

.picked {
  left: 1%;
  top: 78px;
}

.picked::after {
  left: 19px;
}

.leaving {
  left: 31%;
  top: 25px;
}

.leaving::after {
  left: 35px;
}

.arrived {
  left: 62%;
  top: 28px;
}

.arrived::after {
  left: 37px;
}

.delivered {
  left: 95%;
  top: 6px;
  width: 60px;
  padding: 0 7px;
  background: #d0d0d0;
  text-align: center;
  word-break: break-all;
}

.delivered::after {
  left: 19px;
  border-top-color: #d0d0d0;
}

.summary {
  margin: 0 20px 0 15px;
  padding: 27px 0 11px;
  border-bottom: 1px dashed #ccc;
}

.summary h1 {
  font-size: 18px;
  line-height: 24px;
}

.mail-no {
  padding-left: 1px;
  color: #c9202c;
  font-weight: bold;
  line-height: 23px;
}

.detail {
  display: flex;
  gap: 36px;
  padding: 20px 15px 0;
}

.places {
  width: 184px;
  display: flex;
  flex-direction: column;
  gap: 10px;
}

.place {
  height: 66px;
  display: flex;
  flex-direction: column;
  padding: 6px 8px 0;
  border: 1px solid #eee;
  border-left: 5px solid #444;
  border-radius: 3px;
  color: #666;
}

.place.destination {
  border-left-color: #d8202e;
}

.place .label {
  align-self: flex-end;
  font-size: 12px;
  line-height: 18px;
}

.place .country {
  line-height: 32px;
}

.timeline {
  list-style: none;
}

.timeline li {
  position: relative;
  height: 72px;
  padding-left: 26px;
  color: #999;
  line-height: 21px;
}

.timeline li:last-child {
  height: 93px;
}

.timeline li.current {
  color: #333;
}

.timeline time {
  display: block;
}

/* vertical line and the dot on it */
.timeline li::before {
  content: "";
  position: absolute;
  left: 0;
  top: 0;
  width: 1px;
  height: 100%;
  background: #ddd;
}

.timeline li:last-child::before {
  height: 10px;
}

.timeline li::after {
  content: "";
  position: absolute;
  left: -5px;
  top: 4px;
  width: 10px;
  height: 10px;
  border-radius: 50%;
  background: #ccc;
}

.timeline li.flight {
  height: 73px;
}

.timeline li.flight::after {
  display: none;
}

.timeline li svg {
  position: absolute;
  left: -9px;
  top: 0;
  width: 19px;
  height: 19px;
}

.cache {
  height: 45px;
  display: flex;
  align-items: center;
  position: relative;
  margin: 0 -5px 0 6px;
  padding: 2px 39px 0 19px;
  border-top: 1px solid #eee;
  background: #fafafc;
  color: #666;
  font-size: 12px;
}

.cache > svg {
  width: 18px;
  height: 18px;
  margin-right: 9px;
}

.pill-light {
  height: 26px;
  padding: 0 14px;
  border: 1px solid #ccc;
  border-radius: 13px;
  background: #fff;
}

.pill-light.again {
  margin-left: 29px;
  padding: 0 10px;
  border-color: #c8242e;
  color: #c8242e;
}

.pill-light.copy {
  display: flex;
  align-items: center;
  gap: 6px;
  margin: 0 20px 0 auto;
  padding: 0 10px;
}

.pill-light svg {
  width: 15px;
  height: 15px;
}

.times {
  width: 151px;
  padding: 17px 17px 0 15px;
}

.stat {
  height: 72px;
  margin-bottom: 17px;
  border-bottom: 1px dashed #e6e3a8;
}

.stat h2 {
  color: #aaa;
  font-size: 12px;
  font-weight: normal;
  line-height: 18px;
}

.stat p {
  margin-top: 11px;
  font-size: 10px;
  line-height: 20px;
}

.stat b {
  margin-right: 9px;
  font-size: 16px;
}

/* windows taskbar */
.taskbar {
  height: 40px;
  display: flex;
  gap: 3px;
  padding-right: 15px;
  background:
    linear-gradient(90deg, #74585a00, #74985ac0) 0 25px / 100% 7px no-repeat,
    linear-gradient(#6d93b6 0 6px, #41588c 7px, #1340ac 9px, #344a98 15px, #6a4a6c 24px, #664860 30px, #0b307e 32px 40px);
}

.app {
  width: 59px;
  display: flex;
  align-items: center;
  justify-content: center;
  border: 1px solid transparent;
}

.app:first-child {
  width: 48px;
}

.app svg {
  width: 32px;
  height: 32px;
}

.app.open {
  border-color: #a8bcd480;
  background: #d0e0f040;
}

.app.focused {
  border-color: #e8eef8;
  background: #e8ecf880;
}

.tray {
  margin-left: auto;
  display: flex;
  align-items: center;
  gap: 9px;
  padding-top: 2px;
  color: #fff;
  font-family: Roboto, sans-serif;
  font-size: 12px;
}

.tray svg {
  width: 16px;
  height: 16px;
}

.lang {
  margin-left: 6px;
}

.clock {
  margin-left: 4px;
  line-height: 17px;
  text-align: center;
}
```
